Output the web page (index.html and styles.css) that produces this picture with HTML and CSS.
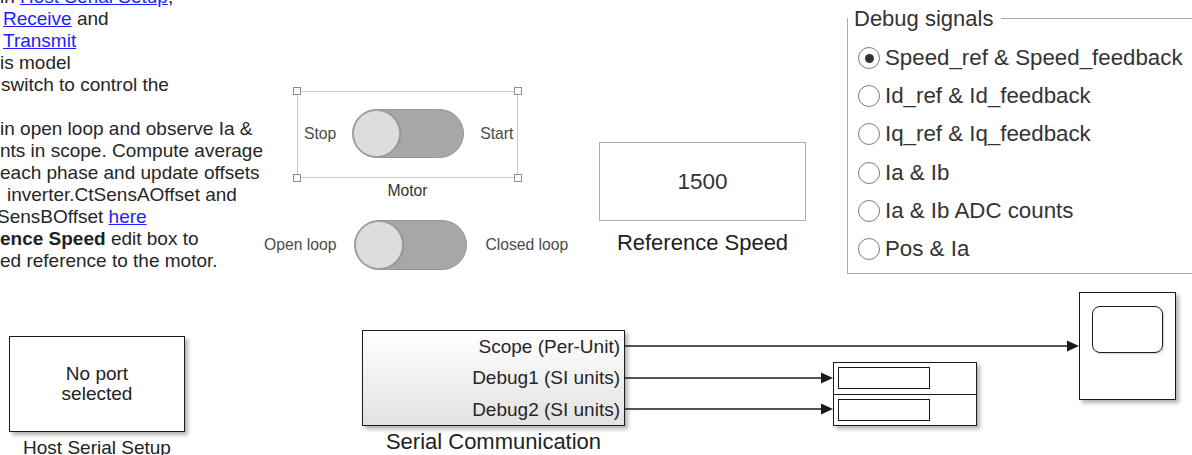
FILE: index.html
```html
<!DOCTYPE html>
<html lang="en">
<head>
<meta charset="utf-8">
<title>Host model</title>
<link rel="stylesheet" href="styles.css">
</head>
<body>
<div class="canvas">

  <div class="notes">
    <div class="ln">in <a href="#">Host Serial Setup</a>,</div>
    <div class="ln in3"><a href="#">Receive</a> and</div>
    <div class="ln in3"><a href="#">Transmit</a></div>
    <div class="ln">is model</div>
    <div class="ln in1">switch to control the</div>
    <div class="ln">&nbsp;</div>
    <div class="ln">in open loop and observe Ia &amp;</div>
    <div class="ln">nts in scope. Compute average</div>
    <div class="ln">each phase and update offsets</div>
    <div class="ln in7">inverter.CtSensAOffset and</div>
    <div class="ln out3">SensBOffset <a href="#">here</a></div>
    <div class="ln"><b>ence Speed</b> edit box to</div>
    <div class="ln">ed reference to the motor.</div>
  </div>

  <div class="motor">
    <div class="sel-box">
      <span class="handle tl"></span>
      <span class="handle tr"></span>
      <span class="handle bl"></span>
      <span class="handle br"></span>
      <span class="sw-label">Stop</span>
      <span class="toggle"><span class="knob"></span></span>
      <span class="sw-label">Start</span>
    </div>
    <div class="sw-name">Motor</div>
  </div>

  <div class="loop">
    <span class="sw-label">Open loop</span>
    <span class="toggle toggle-lg"><span class="knob"></span></span>
    <span class="sw-label">Closed loop</span>
  </div>

  <div class="refspeed">
    <div class="edit">1500</div>
    <div class="label-lg">Reference Speed</div>
  </div>

  <div class="debug">
    <div class="legend">Debug signals</div>
    <div class="radios">
      <div class="radio"><span class="dot on"></span><span>Speed_ref &amp; Speed_feedback</span></div>
      <div class="radio"><span class="dot"></span><span>Id_ref &amp; Id_feedback</span></div>
      <div class="radio"><span class="dot"></span><span>Iq_ref &amp; Iq_feedback</span></div>
      <div class="radio"><span class="dot"></span><span>Ia &amp; Ib</span></div>
      <div class="radio"><span class="dot"></span><span>Ia &amp; Ib ADC counts</span></div>
      <div class="radio"><span class="dot"></span><span>Pos &amp; Ia</span></div>
    </div>
  </div>

  <div class="host">
    <div class="blk host-blk">No port<br>selected</div>
    <div class="blk-name-sm">Host Serial Setup</div>
  </div>

  <div class="serial">
    <div class="blk serial-blk">
      <div class="port">Scope (Per-Unit)</div>
      <div class="port">Debug1 (SI units)</div>
      <div class="port">Debug2 (SI units)</div>
    </div>
    <div class="label-lg serial-name">Serial Communication</div>
  </div>

  <div class="blk display">
    <div class="disp-row"><span class="disp-box"></span></div>
    <div class="disp-row"><span class="disp-box"></span></div>
  </div>

  <div class="blk scope">
    <div class="screen"></div>
  </div>

  <svg class="wires" width="1192" height="455" viewBox="0 0 1192 455">
    <g stroke="#1a1a1a" stroke-width="1.5" fill="none">
      <line x1="625" y1="346" x2="1068" y2="346"/>
      <line x1="625" y1="378" x2="822" y2="378"/>
      <line x1="625" y1="409" x2="822" y2="409"/>
    </g>
    <g fill="#1a1a1a">
      <polygon points="1067,340.5 1079,346 1067,351.5"/>
      <polygon points="821,372.5 833,378 821,383.5"/>
      <polygon points="821,403.5 833,409 821,414.5"/>
    </g>
  </svg>

</div>
</body>
</html>
```

FILE: styles.css
```css
* { box-sizing: border-box; }

html, body {
  margin: 0;
  padding: 0;
  background: #fff;
}

body {
  width: 1192px;
  height: 455px;
  overflow: hidden;
  font-family: "Liberation Sans", Arial, sans-serif;
  color: #262626;
}

.canvas {
  position: relative;
  width: 1192px;
  height: 455px;
  overflow: hidden;
}

/* annotation text (clipped at the left edge of the canvas) */
.notes {
  position: absolute;
  left: 0;
  top: -14px;
  font-size: 19px;
  line-height: 22px;
  white-space: nowrap;
  color: #262626;
}
.notes a {
  color: #1e1eff;
  text-decoration: underline;
}
.notes b { color: #1f1f1f; }
.in1 { padding-left: 1px; }
.in3 { padding-left: 3px; }
.in7 { padding-left: 7px; }
.out3 { margin-left: -3px; }

/* switches */
.motor {
  position: absolute;
  left: 297px;
  top: 91px;
  width: 221px;
}
.sel-box {
  position: relative;
  height: 87px;
  border: 1px solid #cbcbcb;
  display: flex;
  align-items: center;
  gap: 16px;
  padding-left: 6px;
  padding-bottom: 2px;
}
.handle {
  position: absolute;
  width: 8px;
  height: 8px;
  border: 1px solid #8e8e8e;
  background: #fff;
}
.handle.tl { left: -5px; top: -5px; }
.handle.tr { right: -5px; top: -5px; }
.handle.bl { left: -5px; bottom: -5px; }
.handle.br { right: -5px; bottom: -5px; }

.sw-label {
  font-size: 15.7px;
  color: #4a4a4a;
  white-space: nowrap;
}
.sw-name {
  margin-top: 4px;
  font-size: 15.7px;
  line-height: 18px;
  text-align: center;
  color: #333;
}
.toggle {
  position: relative;
  display: block;
  flex: none;
  width: 112px;
  height: 49px;
  border-radius: 25px;
  background: #a7a7a7;
  border: 1px solid #969696;
}
.toggle-lg {
  width: 113px;
  height: 50px;
}
.knob {
  position: absolute;
  left: 0;
  top: 0;
  width: 47px;
  height: 47px;
  border-radius: 50%;
  background: #dddddd;
  border: 1px solid #a3a3a3;
  box-shadow: 1px 0 1px rgba(0, 0, 0, 0.15);
}
.toggle-lg .knob {
  width: 48px;
  height: 48px;
}

.loop {
  position: absolute;
  left: 264px;
  top: 220px;
  display: flex;
  align-items: center;
  gap: 18px;
}

/* reference speed edit box */
.refspeed {
  position: absolute;
  left: 599px;
  top: 142px;
  width: 207px;
}
.edit {
  height: 79px;
  border: 1px solid #acacac;
  display: flex;
  align-items: center;
  justify-content: center;
  font-size: 22.5px;
  color: #333;
}
.label-lg {
  margin-top: 9px;
  font-size: 22px;
  line-height: 26px;
  text-align: center;
  color: #222;
  white-space: nowrap;
}

/* debug signals radio group */
.debug {
  position: absolute;
  left: 847px;
  top: 18px;
  width: 400px;
  height: 256px;
  border: 1px solid #ababab;
}
.legend {
  position: absolute;
  left: 0;
  top: -13px;
  padding: 0 8px 0 6px;
  background: #fff;
  font-size: 22px;
  line-height: 26px;
  color: #333;
}
.radios {
  position: absolute;
  left: 10px;
  top: 20px;
  display: flex;
  flex-direction: column;
}
.radio {
  display: flex;
  align-items: center;
  gap: 5px;
  height: 38.2px;
  font-size: 22.3px;
  color: #333;
  white-space: nowrap;
}
.dot {
  position: relative;
  flex: none;
  width: 22px;
  height: 22px;
  border-radius: 50%;
  border: 1.5px solid #7c7c7c;
  background: #fff;
}
.dot.on::after {
  content: "";
  position: absolute;
  left: 50%;
  top: 50%;
  width: 9px;
  height: 9px;
  margin: -4.5px 0 0 -4.5px;
  border-radius: 50%;
  background: #333;
}

/* simulink blocks */
.blk {
  border: 1.5px solid #1a1a1a;
  box-shadow: 3px 3px 4px rgba(0, 0, 0, 0.3);
  background: #fff;
}

.host {
  position: absolute;
  left: 9px;
  top: 336px;
  width: 176px;
}
.host-blk {
  height: 96px;
  display: flex;
  align-items: center;
  justify-content: center;
  text-align: center;
  font-size: 19px;
  line-height: 20px;
  color: #222;
}
.blk-name-sm {
  margin-top: 5px;
  font-size: 19px;
  line-height: 22px;
  text-align: center;
  color: #222;
  white-space: nowrap;
}

.serial {
  position: absolute;
  left: 362px;
  top: 330px;
  width: 263px;
}
.serial-blk {
  height: 96px;
  background: linear-gradient(#ffffff, #e2e2e2);
  display: flex;
  flex-direction: column;
  align-items: flex-end;
  padding-right: 4px;
}
.port {
  height: 31.3px;
  line-height: 31.3px;
  font-size: 19px;
  color: #262626;
  white-space: nowrap;
}
.serial-name {
  margin-top: 3px;
}

.display {
  position: absolute;
  left: 833px;
  top: 362px;
  width: 144px;
  height: 64px;
  display: flex;
  flex-direction: column;
}
.disp-row {
  flex: 1;
  display: flex;
  align-items: center;
  padding-left: 3.5px;
}
.disp-row + .disp-row {
  border-top: 1.5px solid #1a1a1a;
}
.disp-box {
  width: 92px;
  height: 22px;
  border: 1.5px solid #1a1a1a;
}

.scope {
  position: absolute;
  left: 1079px;
  top: 292px;
  width: 97px;
  height: 108px;
  padding: 12.5px 0 0 11.5px;
}
.screen {
  width: 71px;
  height: 47px;
  border: 1.5px solid #1a1a1a;
  border-radius: 8px;
  box-shadow: 1px 1px 2px rgba(0, 0, 0, 0.2);
}

.wires {
  position: absolute;
  left: 0;
  top: 0;
  pointer-events: none;
}
```
